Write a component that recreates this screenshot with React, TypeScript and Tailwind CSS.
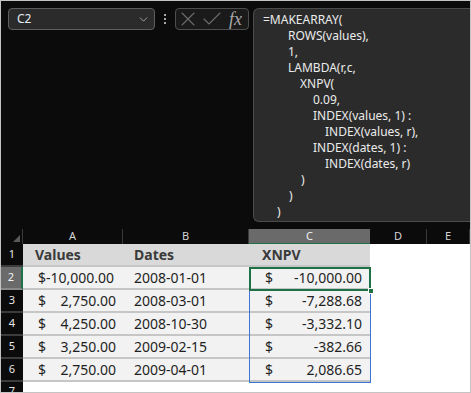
import { Check, ChevronDown, X } from "lucide-react";

type Row = {
  n: number;
  a?: { cur?: string; val: string; whole?: boolean };
  b: string;
  c?: string;
  header?: boolean;
};

const rows: Row[] = [
  { n: 1, b: "Dates", header: true },
  { n: 2, a: { val: "$-10,000.00", whole: true }, b: "2008-01-01", c: "-10,000.00" },
  { n: 3, a: { cur: "$", val: "2,750.00" }, b: "2008-03-01", c: "-7,288.68" },
  { n: 4, a: { cur: "$", val: "4,250.00" }, b: "2008-10-30", c: "-3,332.10" },
  { n: 5, a: { cur: "$", val: "3,250.00" }, b: "2009-02-15", c: "-382.66" },
  { n: 6, a: { cur: "$", val: "2,750.00" }, b: "2009-04-01", c: "2,086.65" },
];

// indentation of each formula line, in px from the box edge
const formula: [number, string][] = [
  [9, "=MAKEARRAY("],
  [34, "ROWS(values),"],
  [34, "1,"],
  [34, "LAMBDA(r,c,"],
  [46, "XNPV("],
  [59, "0.09,"],
  [59, "INDEX(values, 1) :"],
  [71, "INDEX(values, r),"],
  [59, "INDEX(dates, 1) :"],
  [71, "INDEX(dates, r)"],
  [47, ")"],
  [35, ")"],
  [23, ")"],
];

const cols = ["A", "B", "C", "D", "E"];
const colW = ["w-[100px]", "w-[126px]", "w-[121px]", "w-[57px]", "w-[43px]"];

export default function App() {
  return (
    <div
      className="w-[471px] h-[393px] overflow-hidden bg-[#0b0b0b] border border-[#c4c4c4] flex flex-col"
      style={{ fontFamily: '"Noto Sans", "Open Sans", sans-serif' }}
    >
      {/* Formula bar */}
      <div className="h-[228px] flex items-start pt-[7px] pl-[7px] shrink-0">
        <div className="w-[147px] h-[22px] rounded-[4px] bg-[#2b2b2b] border border-[#5e5e5e] flex items-center pl-[8px] pr-[4px]">
          <span className="text-[12px] text-[#e4ecf6] flex-1 leading-none">C2</span>
          <ChevronDown className="w-[13px] h-[13px] text-[#bdbdbd]" strokeWidth={1.5} />
        </div>
        <div className="w-[20px] h-[22px] flex flex-col items-center justify-center gap-[2px]">
          <span className="w-[2px] h-[2px] bg-[#a8a8a8]" />
          <span className="w-[2px] h-[2px] bg-[#a8a8a8]" />
          <span className="w-[2px] h-[2px] bg-[#a8a8a8]" />
        </div>
        <div className="w-[74px] h-[22px] rounded-[4px] bg-[#1a1a1a] border border-[#4e4e4e] flex items-center">
          <X className="w-[24px] h-[24px] shrink-0 -my-1 text-[#6c6c6c]" strokeWidth={1.1} />
          <Check className="w-[24px] h-[24px] shrink-0 -my-1 text-[#6c6c6c]" strokeWidth={1.1} />
          <span
            className="ml-[5px] text-[18px] italic text-[#a9a9a9] leading-none"
            style={{ fontFamily: '"Liberation Serif", "DejaVu Serif", serif' }}
          >
            fx
          </span>
        </div>
        <div className="ml-[4px] flex-1 h-[214px] rounded-l-[6px] bg-[#2b2b2b] border border-r-0 border-[#4c4c4c] pt-[3px]">
          {formula.map(([indent, text], i) => (
            <div
              key={i}
              className="h-[16px] text-[12px] leading-[16px] text-[#ebebeb] whitespace-pre"
              style={{ paddingLeft: indent }}
            >
              {text}
            </div>
          ))}
        </div>
      </div>

      {/* Grid */}
      <div className="relative flex-1 bg-white">
        {/* Column headers */}
        <div className="flex h-[15px] bg-[#0b0b0b]">
          <div className="w-[22px] relative border-r border-[#3a3a3a]">
            <div className="absolute right-[2px] bottom-[2px] w-0 h-0 border-l-[7px] border-l-transparent border-b-[7px] border-b-[#5a5a5a]" />
          </div>
          {cols.map((c, i) => (
            <div
              key={c}
              className={`${colW[i]} text-[11px] leading-[14px] text-center ${
                c === "C"
                  ? "bg-[#6a6a6a] text-[#f0f0f0] border-b border-[#1e7145]"
                  : "text-[#d4d4d4] border-r border-[#3a3a3a]"
              }`}
            >
              {c}
            </div>
          ))}
        </div>

        {rows.map((r) => {
          const cell = r.header
            ? "bg-[#d9d9d9] border-b-2 border-[#c6c6c6] font-bold text-[#3a3a3a]"
            : "bg-[#f2f2f2] border-b-2 border-[#c6c6c6] text-[#1f1f1f]";
          return (
            <div key={r.n} className="flex h-[23px] text-[14px]">
              <div
                className={`w-[22px] flex items-center justify-center text-[11px] border-b-2 ${
                  r.n === 2
                    ? "bg-[#6a6a6a] text-[#f4f4f4] border-[#8a8a8a] border-r-2 border-r-[#1e7145]"
                    : "bg-[#0b0b0b] text-[#e8e8e8] border-[#3c3c3c]"
                }`}
              >
                {r.n}
              </div>
              <div className={`w-[100px] flex items-center ${cell}`}>
                {r.header ? (
                  <span className="pl-[12px]">Values</span>
                ) : r.a?.whole ? (
                  <span className="pl-[15px]">{r.a.val}</span>
                ) : (
                  <>
                    <span className="pl-[15px] flex-1">{r.a?.cur}</span>
                    <span className="pr-[7px]">{r.a?.val}</span>
                  </>
                )}
              </div>
              <div className={`w-[126px] flex items-center pl-[11px] ${cell}`}>{r.b}</div>
              <div className={`w-[121px] flex items-center ${cell}`}>
                {r.header ? (
                  <span className="pl-[13px]">XNPV</span>
                ) : (
                  <>
                    <span className="pl-[16px] flex-1">$</span>
                    <span className="pr-[8px]">{r.c}</span>
                  </>
                )}
              </div>
              <div className="w-[100px] bg-white" />
            </div>
          );
        })}

        <div className="flex h-[12px]">
          <div className="w-[22px] bg-[#0b0b0b] text-[11px] text-[#e8e8e8] text-center leading-[18px]">7</div>
          <div className="flex-1 bg-white" />
        </div>

        {/* Spill range and active cell */}
        <div className="absolute left-[248px] top-[38px] w-[122px] h-[116px] border border-[#3b76d6] pointer-events-none" />
        <div className="absolute left-[248px] top-[38px] w-[122px] h-[24px] border-2 border-[#1e7145] pointer-events-none" />
        <div className="absolute left-[367px] top-[59px] w-[6px] h-[6px] bg-[#1e7145] border border-white" />
      </div>
    </div>
  );
}
